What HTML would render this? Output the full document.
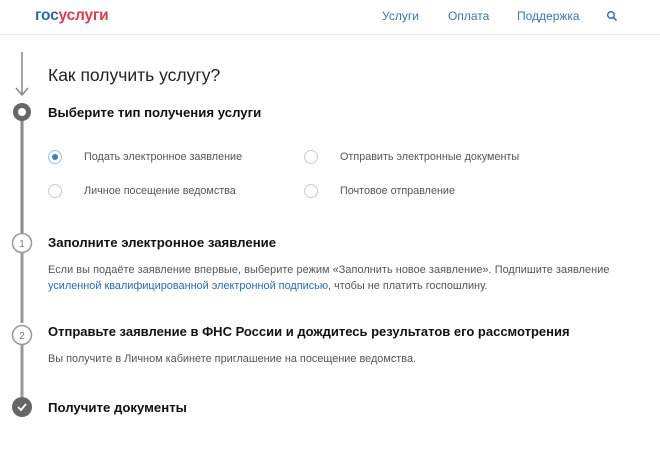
<!DOCTYPE html>
<html><head><meta charset="utf-8"><style>
*{margin:0;padding:0;box-sizing:border-box}
body{width:660px;height:462px;background:#fff;font-family:"Liberation Sans",sans-serif;position:relative;overflow:hidden;color:#222}
.a{position:absolute;white-space:nowrap}
.hdr{position:absolute;left:0;top:0;width:660px;height:35px;border-bottom:1px solid #e4e4e4}
.nav{font-size:12px;color:#3a76b0;top:9px}
h2{font-size:13.2px;font-weight:bold;color:#111}
.r{position:absolute;width:14px;height:14px;border:1px solid #ccc;border-radius:50%}
.rt{font-size:10.8px;color:#555}
.p{font-size:10.9px;color:#555}
</style></head><body>
<div class="hdr"></div>
<div class="a" style="left:35px;top:7px;font-size:15.5px;font-weight:bold;letter-spacing:-0.2px"><span style="color:#2a69a4">гос</span><span style="color:#e03a4c">услуги</span></div>
<div class="a nav" style="left:382px">Услуги</div>
<div class="a nav" style="left:448px">Оплата</div>
<div class="a nav" style="left:517px">Поддержка</div>
<svg class="a" style="left:606px;top:10px" width="12" height="12" viewBox="0 0 12 12"><circle cx="5" cy="5" r="3.3" fill="none" stroke="#3a76b0" stroke-width="1.5"/><path d="M7.5 7.5L10.5 10.5" stroke="#3a76b0" stroke-width="1.7"/></svg>

<svg class="a" style="left:0;top:45px" width="44" height="380" viewBox="0 45 44 380">
<path d="M22 52V94M16 88L22 95L28 88" fill="none" stroke="#888" stroke-width="1.5"/>
<rect x="20.5" y="120" width="3" height="113" fill="#888"/>
<rect x="20.5" y="253" width="3" height="70" fill="#999"/>
<rect x="20.5" y="345" width="3" height="52" fill="#999"/>
<circle cx="22" cy="112" r="9" fill="#666"/><circle cx="22" cy="112" r="4" fill="#fff"/>
<circle cx="22" cy="243" r="9.5" fill="#fff" stroke="#999" stroke-width="1.5"/>
<text x="22" y="247" font-size="10" fill="#777" text-anchor="middle" font-family="Liberation Sans">1</text>
<circle cx="22" cy="335" r="9.5" fill="#fff" stroke="#999" stroke-width="1.5"/>
<text x="22" y="339" font-size="10" fill="#777" text-anchor="middle" font-family="Liberation Sans">2</text>
<circle cx="22" cy="407" r="10" fill="#666"/>
<path d="M18 407L21 410L26 404" fill="none" stroke="#fff" stroke-width="1.8"/>
</svg>

<div class="a" style="left:48px;top:65px;font-size:17.5px;color:#222">Как получить услугу?</div>
<h2 class="a" style="left:48px;top:105px">Выберите тип получения услуги</h2>

<div class="r" style="left:48px;top:150px;border-color:#9cc0de"></div><div class="a" style="left:52px;top:154px;width:6px;height:6px;border-radius:50%;background:#3a7fc0"></div>
<div class="a rt" style="left:84px;top:151px">Подать электронное заявление</div>
<div class="r" style="left:304px;top:150px"></div>
<div class="a rt" style="left:340px;top:151px">Отправить электронные документы</div>
<div class="r" style="left:48px;top:184px"></div>
<div class="a rt" style="left:84px;top:185px">Личное посещение ведомства</div>
<div class="r" style="left:304px;top:184px"></div>
<div class="a rt" style="left:340px;top:185px">Почтовое отправление</div>

<h2 class="a" style="left:48px;top:235px">Заполните электронное заявление</h2>
<div class="a p" style="left:48px;top:264px;letter-spacing:0.05px">Если вы подаёте заявление впервые, выберите режим «Заполнить новое заявление». Подпишите заявление</div>
<div class="a p" style="left:48px;top:280px"><span style="color:#2a6cae">усиленной квалифицированной электронной подписью</span>, чтобы не платить госпошлину.</div>

<h2 class="a" style="left:48px;top:324px;font-size:13px">Отправьте заявление в ФНС России и дождитесь результатов его рассмотрения</h2>
<div class="a p" style="left:48px;top:353px">Вы получите в Личном кабинете приглашение на посещение ведомства.</div>

<h2 class="a" style="left:48px;top:400px">Получите документы</h2>
</body></html>
